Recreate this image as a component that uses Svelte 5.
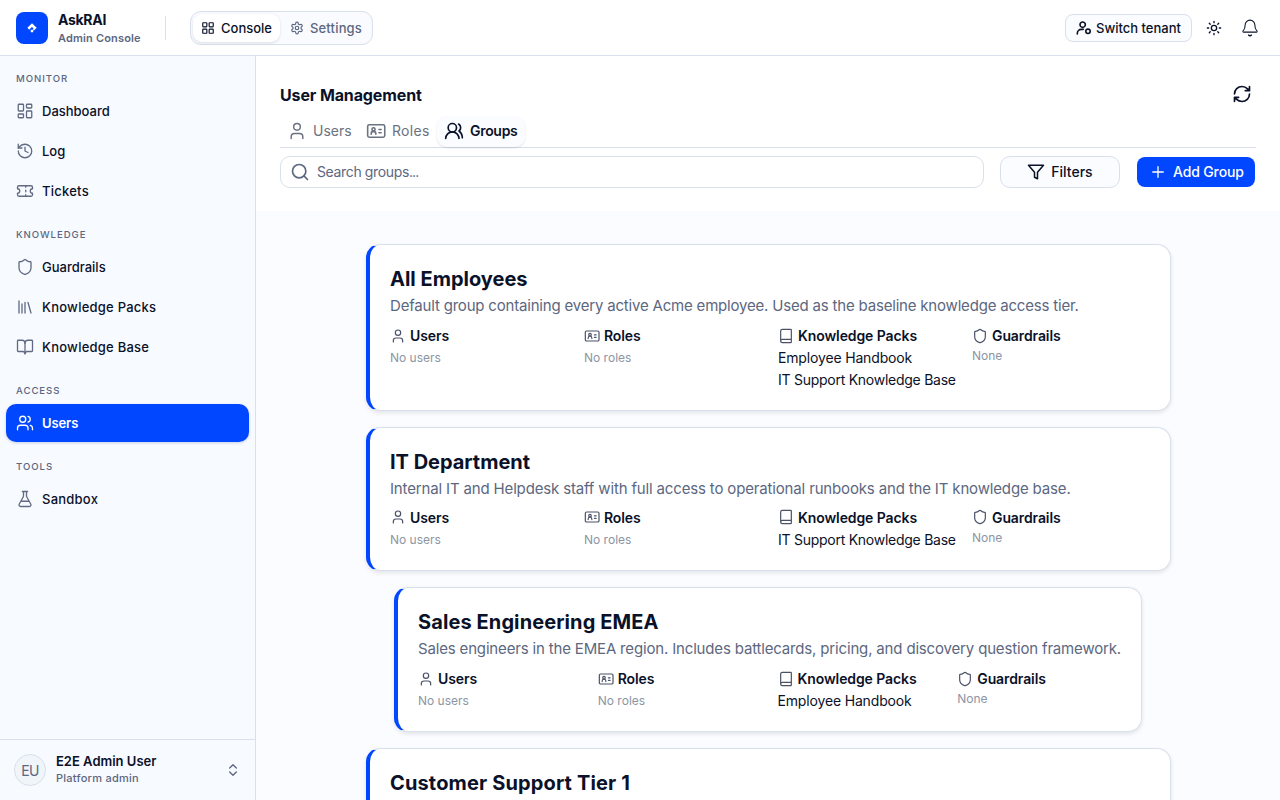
<script>
  const icons = {
    grid: '<rect x="3" y="3" width="7" height="7" rx="1"/><rect x="14" y="3" width="7" height="7" rx="1"/><rect x="14" y="14" width="7" height="7" rx="1"/><rect x="3" y="14" width="7" height="7" rx="1"/>',
    settings: '<path d="M12.22 2h-.44a2 2 0 0 0-2 2v.18a2 2 0 0 1-1 1.73l-.43.25a2 2 0 0 1-2 0l-.15-.08a2 2 0 0 0-2.73.73l-.22.38a2 2 0 0 0 .73 2.73l.15.1a2 2 0 0 1 1 1.72v.51a2 2 0 0 1-1 1.74l-.15.09a2 2 0 0 0-.73 2.73l.22.38a2 2 0 0 0 2.73.73l.15-.08a2 2 0 0 1 2 0l.43.25a2 2 0 0 1 1 1.73V20a2 2 0 0 0 2 2h.44a2 2 0 0 0 2-2v-.18a2 2 0 0 1 1-1.73l.43-.25a2 2 0 0 1 2 0l.15.08a2 2 0 0 0 2.73-.73l.22-.39a2 2 0 0 0-.73-2.73l-.15-.08a2 2 0 0 1-1-1.74v-.5a2 2 0 0 1 1-1.74l.15-.09a2 2 0 0 0 .73-2.73l-.22-.38a2 2 0 0 0-2.73-.73l-.15.08a2 2 0 0 1-2 0l-.43-.25a2 2 0 0 1-1-1.73V4a2 2 0 0 0-2-2z"/><circle cx="12" cy="12" r="3"/>',
    tenant: '<circle cx="10" cy="7" r="4"/><path d="M2 21v-1a6 6 0 0 1 6-6h3"/><circle cx="18" cy="17" r="3.3"/>',
    sun: '<circle cx="12" cy="12" r="4"/><path d="M12 2v2M12 20v2M4.93 4.93l1.41 1.41M17.66 17.66l1.41 1.41M2 12h2M20 12h2M6.34 17.66l-1.41 1.41M19.07 4.93l-1.41 1.41"/>',
    bell: '<path d="M10.27 21.5a2 2 0 0 0 3.46 0" stroke-width="2"/><path d="M3.26 15.33A1 1 0 0 0 4 17.5h16a1 1 0 0 0 .74-2.17C19.41 13.96 18.5 12.5 18.5 8A6.5 6.5 0 0 0 5.5 8c0 4.5-.91 5.96-2.24 7.33"/>',
    dashboard: '<rect x="3" y="3" width="7" height="9" rx="1"/><rect x="14" y="3" width="7" height="5" rx="1"/><rect x="14" y="12" width="7" height="9" rx="1"/><rect x="3" y="16" width="7" height="5" rx="1"/>',
    history: '<path d="M3 12a9 9 0 1 0 9-9 9.75 9.75 0 0 0-6.74 2.74L3 8"/><path d="M3 3v5h5M12 7v5l4 2"/>',
    ticket: '<path d="M2 9a3 3 0 0 1 0 6v2a2 2 0 0 0 2 2h16a2 2 0 0 0 2-2v-2a3 3 0 0 1 0-6V7a2 2 0 0 0-2-2H4a2 2 0 0 0-2 2ZM13 5v2M13 17v2M13 11v2"/>',
    shield: '<path d="M20 13c0 5-3.5 7.5-7.66 8.95a1 1 0 0 1-.67-.01C7.5 20.5 4 18 4 13V6a1 1 0 0 1 1-1c2 0 4.5-1.2 6.24-2.72a1.17 1.17 0 0 1 1.52 0C14.51 3.81 17 5 19 5a1 1 0 0 1 1 1z"/>',
    library: '<path d="m16 6 4 14M12 6v14M8 8v12M4 4v16"/>',
    bookopen: '<path d="M12 7v14"/><path d="M3 18a1 1 0 0 1-1-1V4a1 1 0 0 1 1-1h5a4 4 0 0 1 4 4 4 4 0 0 1 4-4h5a1 1 0 0 1 1 1v13a1 1 0 0 1-1 1h-6a3 3 0 0 0-3 3 3 3 0 0 0-3-3z"/>',
    users: '<path d="M16 21v-2a4 4 0 0 0-4-4H6a4 4 0 0 0-4 4v2"/><circle cx="9" cy="7" r="4"/><path d="M22 21v-2a4 4 0 0 0-3-3.87M16 3.13a4 4 0 0 1 0 7.75"/>',
    flask: '<path d="M14 2v6a2 2 0 0 0 .25.96l5.51 10.08A2 2 0 0 1 18 22H6a2 2 0 0 1-1.76-2.96l5.51-10.08A2 2 0 0 0 10 8V2M6.45 15h11.1M8.5 2h7"/>',
    updown: '<path d="m7 15 5 5 5-5M7 9l5-5 5 5"/>',
    refresh: '<path d="M3 12a9 9 0 0 1 9-9 9.75 9.75 0 0 1 6.74 2.74L21 8M21 3v5h-5M21 12a9 9 0 0 1-9 9 9.75 9.75 0 0 1-6.74-2.74L3 16M8 16H3v5"/>',
    user: '<path d="M19 21v-2a4 4 0 0 0-4-4H9a4 4 0 0 0-4 4v2"/><circle cx="12" cy="7" r="4"/>',
    idcard: '<rect x="2" y="4.5" width="20.5" height="15" rx="2"/><circle cx="9" cy="10" r="1.9"/><path d="M6.2 15.8v-.6a2.8 2.8 0 0 1 5.6 0v.6M15.6 10.2h2.6M15.6 14h2.6"/>',
    group: '<path d="M18 21a8 8 0 0 0-16 0"/><circle cx="10" cy="8" r="5"/><path d="M22 20c0-3.37-2-6.5-4-8a5 5 0 0 0-.45-8.3"/>',
    search: '<circle cx="11" cy="11" r="8"/><path d="m21 21-4.3-4.3"/>',
    filter: '<path d="M22 3H2l8 9.46V19l4 2v-8.54z"/>',
    plus: '<path d="M5 12h14M12 5v14"/>',
    book: '<path d="M4 19.5v-15A2.5 2.5 0 0 1 6.5 2H19a1 1 0 0 1 1 1v18a1 1 0 0 1-1 1H6.5a1 1 0 0 1 0-5H20"/>'
  };

  const sections = [
    { label: 'Monitor', items: [['dashboard', 'Dashboard'], ['history', 'Log'], ['ticket', 'Tickets']] },
    { label: 'Knowledge', items: [['shield', 'Guardrails'], ['library', 'Knowledge Packs'], ['bookopen', 'Knowledge Base']] },
    { label: 'Access', items: [['users', 'Users']] },
    { label: 'Tools', items: [['flask', 'Sandbox']] }
  ];

  const groups = [
    { name: 'All Employees', desc: 'Default group containing every active Acme employee. Used as the baseline knowledge access tier.', packs: ['Employee Handbook', 'IT Support Knowledge Base'], tracking: -0.19, titleTracking: 0 },
    { name: 'IT Department', desc: 'Internal IT and Helpdesk staff with full access to operational runbooks and the IT knowledge base.', packs: ['IT Support Knowledge Base'], tracking: -0.155, titleTracking: -0.02 },
    { name: 'Sales Engineering EMEA', desc: 'Sales engineers in the EMEA region. Includes battlecards, pricing, and discovery question framework.', packs: ['Employee Handbook'], narrow: true, tracking: -0.165, titleTracking: 0.1 },
    { name: 'Customer Support Tier 1', titleTracking: 0.14 }
  ];
</script>

{#snippet icon(name, size, stroke = 2)}
  <svg width={size} height={size} viewBox="0 0 24 24" fill="none" stroke="currentColor" stroke-width={stroke} stroke-linecap="round" stroke-linejoin="round" aria-hidden="true">{@html icons[name]}</svg>
{/snippet}

<div class="app">
  <header>
    <div class="logo">
      <svg width="32" height="32" viewBox="0 0 32 32" fill="#fff"><path d="M16 11.2 20.7 15.8 17.9 18.6 16.9 17.4 17.5 16.2 15.9 15.1 13.2 17.7 11.4 15.8Z"/><rect x="14.8" y="17.8" width="2.4" height="2.4" transform="rotate(45 16 19)"/></svg>
    </div>
    <div class="brand"><b>AskRAI</b><span>Admin Console</span></div>
    <div class="rule"></div>
    <nav class="switch">
      <span class="seg on">{@render icon('grid', 14)}<i>Console</i></span>
      <span class="seg off">{@render icon('settings', 14)}<i>Settings</i></span>
    </nav>
    <div class="tools">
      <button class="tenant">{@render icon('tenant', 16, 2.4)}<span>Switch tenant</span></button>
      {@render icon('sun', 16)}
      {@render icon('bell', 18, 1.4)}
    </div>
  </header>

  <div class="body">
    <aside>
      <div class="sections">
        {#each sections as s}
          <section>
            <h6>{s.label}</h6>
            {#each s.items as [ic, text]}
              <div class="item" class:active={text === 'Users'} class:wide={ic === 'library' || ic === 'bookopen' || ic === 'ticket' || ic === 'flask'}>{@render icon(ic, 18, 1.75)}<span>{text}</span></div>
            {/each}
          </section>
        {/each}
      </div>
      <div class="account">
        <div class="avatar">EU</div>
        <div class="who"><b>E2E Admin User</b><span>Platform admin</span></div>
        {@render icon('updown', 16)}
      </div>
    </aside>

    <main>
      <div class="top">
        <div class="titlebar"><h1>User Management</h1>{@render icon('refresh', 20)}</div>
        <div class="tabs">
          <span class="tab t1">{@render icon('user', 20, 1.75)}<i>Users</i></span>
          <span class="tab t2">{@render icon('idcard', 20, 1.9)}<i>Roles</i></span>
          <span class="tab t3">{@render icon('group', 20)}<i>Groups</i></span>
        </div>
        <div class="bar">
          <div class="search">{@render icon('search', 20)}<span>Search groups<em>...</em></span></div>
          <button class="filters">{@render icon('filter', 18)}<span>Filters</span></button>
          <button class="add">{@render icon('plus', 18, 1.75)}<span>Add Group</span></button>
        </div>
      </div>
      <div class="list">
        {#each groups as g}
          <article class:narrow={g.narrow} class:collapsed={!g.desc}>
            <h2 style="letter-spacing: {g.titleTracking}px">{g.name}</h2>
            {#if g.desc}
              <p style="letter-spacing: {g.tracking}px">{g.desc}</p>
              <div class="cols">
                <div><h3>{@render icon('user', 16, 1.8)}<span>Users</span></h3><small>No users</small></div>
                <div><h3>{@render icon('idcard', 16, 1.8)}<span>Roles</span></h3><small>No roles</small></div>
                <div><h3>{@render icon('book', 16, 1.8)}<span>Knowledge Packs</span></h3>
                  {#each g.packs as p}<div class="pack" class:long={p.length > 20}>{p}</div>{/each}
                </div>
                <div><h3>{@render icon('shield', 16, 1.8)}<span>Guardrails</span></h3><small class="none">None</small></div>
              </div>
            {/if}
          </article>
        {/each}
      </div>
    </main>
  </div>
</div>

<style>
  :global(body) { overflow: hidden; }
  * { box-sizing: border-box; }
  .app { height: 800px; width: 1280px; display: flex; flex-direction: column; overflow: hidden; background: #fff; color: #0a1128; font-family: Inter, sans-serif; font-size: 13px; }
  svg { flex: none; display: block; }
  i, em { font-style: normal; }
  span, b, h1, h2, h3, p, small, i { white-space: nowrap; }
  button { font: inherit; color: inherit; margin: 0; }
  header { height: 56px; flex: none; display: flex; align-items: center; padding: 0 20px 0 16px; border-bottom: 1px solid #d8e0ec; }
  .logo { width: 32px; height: 32px; border-radius: 8px; background: #0047ff; }
  .brand { width: 107px; margin-left: 10px; display: flex; flex-direction: column; }
  .brand b { font-size: 14px; line-height: 20px; font-weight: 700; letter-spacing: -.3px; }
  .brand span { font-size: 11px; line-height: 16px; font-weight: 600; letter-spacing: .16px; color: #5c6780; }
  .rule { width: 1px; height: 24px; background: #d8e0ec; }
  .switch { margin-left: 24px; height: 34px; width: 183px; border: 1px solid #d8e0ec; border-radius: 11px; background: #f9fbff; padding: 2px; display: flex; }
  .seg { display: flex; align-items: center; gap: 6px; padding: 0 8px; color: #5c6780; font-weight: 500; }
  .seg.on { width: 87px; border-radius: 9px; background: #fff; color: #0a1128; box-shadow: 0 1px 3px rgba(10,17,40,.13); }
  .seg.off { padding-left: 10px; letter-spacing: .17px; }
  .tools { margin-left: auto; display: flex; align-items: center; margin-right: 1px; }
  .tenant { width: 127px; height: 28px; border: 1px solid #d8e0ec; border-radius: 8px; background: #fafcff; display: flex; align-items: center; gap: 4px; padding: 0 10px; font-weight: 500; margin-right: 14px; }
  .tools > :global(svg + svg) { margin-left: 19px; }
  .body { flex: 1; min-height: 0; display: flex; }
  aside { width: 256px; flex: none; background: #f7faff; border-right: 1px solid #d8dfee; display: flex; flex-direction: column; }
  .sections { flex: 1; padding: 12px 6px; display: flex; flex-direction: column; gap: 14px; }
  section { display: flex; flex-direction: column; gap: 2px; }
  h6 { margin: 0 0 2px; padding-left: 10px; height: 20px; line-height: 21px; font-size: 9.6px; font-weight: 550; letter-spacing: .95px; text-transform: uppercase; color: #5c6780; }
  .item { height: 38px; border-radius: 10px; display: flex; align-items: center; gap: 8px; padding: 0 10px; font-weight: 500; }
  .item.wide { letter-spacing: .24px; }
  .item > :global(svg) { color: #626b83; }
  .item.active { background: #0047ff; color: #fff; font-weight: 600; letter-spacing: -.1px; box-shadow: 0 1px 3px rgba(0,40,140,.2); }
  .item.active > :global(svg) { color: #fff; }
  .account { height: 61px; border-top: 1px solid #d8dfee; display: flex; align-items: center; padding: 0 14px; color: #5c6780; }
  .avatar { width: 32px; height: 32px; border: 1px solid #d8e0ec; border-radius: 50%; background: #f0f5fa; display: grid; place-items: center; font-size: 14px; letter-spacing: -.6px; }
  .who { margin-left: 10px; margin-bottom: 2px; flex: 1; display: flex; flex-direction: column; }
  .who b { font-size: 13px; line-height: 17px; font-weight: 600; color: #0a1128; }
  .who span { font-size: 11px; line-height: 16px; font-weight: 500; letter-spacing: .26px; }
  main { flex: 1; min-width: 0; background: #fbfcff; display: flex; flex-direction: column; }
  .top { height: 155px; flex: none; background: #fff; padding: 23px 24px 0; }
  .titlebar { height: 32px; display: flex; justify-content: space-between; align-items: flex-start; padding: 4px 4px 0 0; }
  .titlebar :global(svg) { margin-top: 1px; }
  h1 { margin: 0; font-size: 16px; line-height: 24px; font-weight: 700; letter-spacing: -.12px; }
  .tabs { height: 37px; padding-top: 5px; border-bottom: 1px solid #d8e0ec; display: flex; font-size: 14px; }
  .tab { height: 31px; display: flex; align-items: center; gap: 6px; padding: 0 7px 2px; color: #6b7280; }
  .t1 { width: 79px; }
  .t2 { width: 78px; letter-spacing: .3px; }
  .t3 { width: 88px; border-radius: 10px; background: #fafcff; color: #0a1128; font-weight: 600; letter-spacing: -.3px; box-shadow: 0 1px 2px rgba(10,17,40,.12); }
  .bar { margin-top: 8px; display: flex; align-items: center; font-size: 14px; }
  .search { width: 704px; height: 32px; border: 1px solid #d8e0ec; border-radius: 10px; display: flex; align-items: center; gap: 7px; padding-left: 9px; color: #5c6780; }
  .search span { letter-spacing: -.36px; padding-bottom: 1px; }
  .search em { letter-spacing: -.9px; }
  .filters { width: 120px; height: 32px; margin-left: 16px; border: 1px solid #d8e0ec; border-radius: 10px; background: #fafcff; display: flex; align-items: center; justify-content: center; gap: 6px; font-weight: 500; }
  .filters span, .add span { padding-bottom: 1px; }
  .add { width: 118px; height: 30px; margin-left: 17px; border: 0; border-radius: 8px; background: #0047ff; color: #fff; display: flex; align-items: center; gap: 6px; padding: 0 12px; font-weight: 500; letter-spacing: -.14px; }
  .list { flex: 1; min-height: 0; overflow: hidden; padding-top: 33px; display: flex; flex-direction: column; align-items: center; gap: 16px; }
  article { width: 805px; flex: none; background: #fff; border: 1px solid #d8e0ec; border-left: 4px solid #0047ff; border-radius: 14px; padding: 20px 19.5px 18.5px 20.5px; box-shadow: 0 2px 4px rgba(10,17,40,.1); }
  article:nth-child(2) p { margin-bottom: 6.4px; }
  article:nth-child(2) { padding-bottom: 19.2px; }
  article.narrow { width: 748px; padding: 20px 20px 18.6px; }
  article.collapsed { height: 144px; }
  h2 { margin: 0; font-size: 20px; line-height: 28px; font-weight: 700; }
  p { margin: 1px 0 7px; font-size: 15px; line-height: 24px; color: #5c6780; }
  .cols { display: grid; grid-template-columns: repeat(4, minmax(0, 1fr)); gap: 16px; }
  h3 { margin: 0 0 1px; height: 21px; display: flex; align-items: center; gap: 4px; font-size: 14px; font-weight: 600; letter-spacing: -.1px; }
  h3 > :global(svg) { color: #4b5268; }
  small { display: block; font-size: 12px; line-height: 22px; color: #8b95a5; }
  .none { line-height: 18px; }
  .pack { font-size: 14px; line-height: 22px; letter-spacing: -.16px; white-space: nowrap; }
  .pack.long { letter-spacing: -.26px; }
</style>
